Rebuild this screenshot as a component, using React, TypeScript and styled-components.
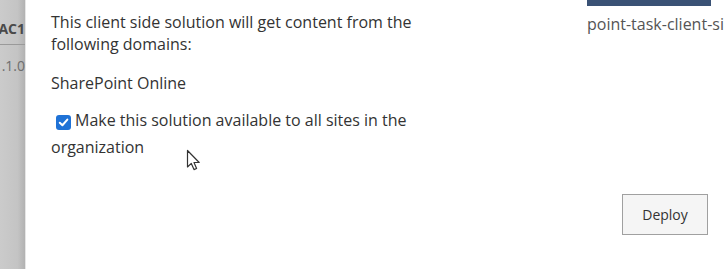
import React from "react";
import styled, { createGlobalStyle } from "styled-components";

const Global = createGlobalStyle`
  html, body { margin: 0; padding: 0; background: #ffffff; }
  body { width: 724px; height: 269px; overflow: hidden; font-family: "Open Sans", "Noto Sans", sans-serif; }
`;

const Page = styled.div`
  position: relative;
  display: flex;
  width: 724px;
  height: 269px;
  overflow: hidden;
  background: #ffffff;
`;

const LeftStrip = styled.div`
  width: 25px;
  flex: 0 0 25px;
  height: 100%;
  overflow: hidden;
  background: linear-gradient(to right, #cbcbcb 0%, #c4c4c4 70%, #b2b2b2 100%);
  border-right: 1px solid #e6e6e6;
  display: flex;
  flex-direction: column;
  align-items: flex-end;
`;

const StripTitle = styled.div`
  margin-top: 20px;
  width: 25px;
  display: flex;
  justify-content: flex-end;
  font-weight: 700;
  font-size: 14px;
  line-height: 18px;
  color: #4a4a4a;
  white-space: nowrap;
  padding-bottom: 6px;
  border-bottom: 1px solid #9a9a9a;
`;

const StripVersion = styled.div`
  margin-top: 13px;
  font-size: 14px;
  line-height: 16px;
  color: #6e6e6e;
  white-space: nowrap;
`;

const Panel = styled.div`
  flex: 1;
  display: flex;
  flex-direction: column;
  height: 100%;
`;

const TopRow = styled.div`
  display: flex;
`;

const DialogBody = styled.div`
  padding: 11px 0 0 25px;
  width: 380px;
  color: #333333;
  font-size: 16px;
  line-height: 22px;
`;

const Para = styled.p<{ $gap?: number }>`
  margin: 0 0 ${(p) => p.$gap ?? 15}px 0;
`;

const CheckRow = styled.label`
  display: block;
  margin: 0;
  line-height: 27px;
`;

const Box = styled.span`
  display: inline-flex;
  align-items: center;
  justify-content: center;
  width: 15px;
  height: 15px;
  margin: 0 4px 0 5px;
  border-radius: 3px;
  background: #1f72d6;
  vertical-align: -2px;
`;

const RightCol = styled.div`
  margin-left: auto;
  width: 137px;
  overflow: hidden;
`;

const Bar = styled.div`
  width: 124px;
  height: 6px;
  background: #3a5275;
`;

const FileName = styled.div`
  margin-top: 8px;
  font-size: 16px;
  line-height: 20px;
  color: #555555;
  white-space: nowrap;
`;

const Footer = styled.div`
  margin-top: auto;
  display: flex;
  justify-content: flex-end;
  padding: 0 16px 34px 0;
`;

const DeployButton = styled.button`
  width: 86px;
  height: 41px;
  border: 1px solid #a0a0a0;
  background: #f5f5f5;
  color: #333333;
  font-family: "Open Sans", "Noto Sans", sans-serif;
  font-size: 14px;
  padding: 0;
`;

const Cursor = styled.svg`
  position: absolute;
  left: 186px;
  top: 149px;
`;

export default function App() {
  return (
    <>
      <Global />
      <Page>
        <LeftStrip>
          <StripTitle>AC1</StripTitle>
          <StripVersion>.1.0</StripVersion>
        </LeftStrip>
        <Panel>
          <TopRow>
            <DialogBody>
              <Para $gap={17}>
                This client side solution will get content from the following domains:
              </Para>
              <Para $gap={13}>SharePoint Online</Para>
              <CheckRow>
                <Box>
                  <svg width="11" height="11" viewBox="0 0 10 10">
                    <path d="M1.6 5.2 L4 7.5 L8.5 2.3" fill="none" stroke="#fff" strokeWidth="1.8" strokeLinecap="round" strokeLinejoin="round" />
                  </svg>
                </Box>
                Make this solution available to all sites in the organization
              </CheckRow>
            </DialogBody>
            <RightCol>
              <Bar />
              <FileName>point-task-client-side-solution.sppkg</FileName>
            </RightCol>
          </TopRow>
          <Footer>
            <DeployButton>Deploy</DeployButton>
          </Footer>
        </Panel>
        <Cursor width="18" height="24" viewBox="0 0 18 24">
          <path d="M1.5 1.5 L1.5 18 L5.3 14.4 L8 20.6 L10.6 19.5 L8 13.5 L13.2 13.5 Z" fill="#ffffff" stroke="#333333" strokeWidth="1.2" strokeLinejoin="round" />
        </Cursor>
      </Page>
    </>
  );
}
